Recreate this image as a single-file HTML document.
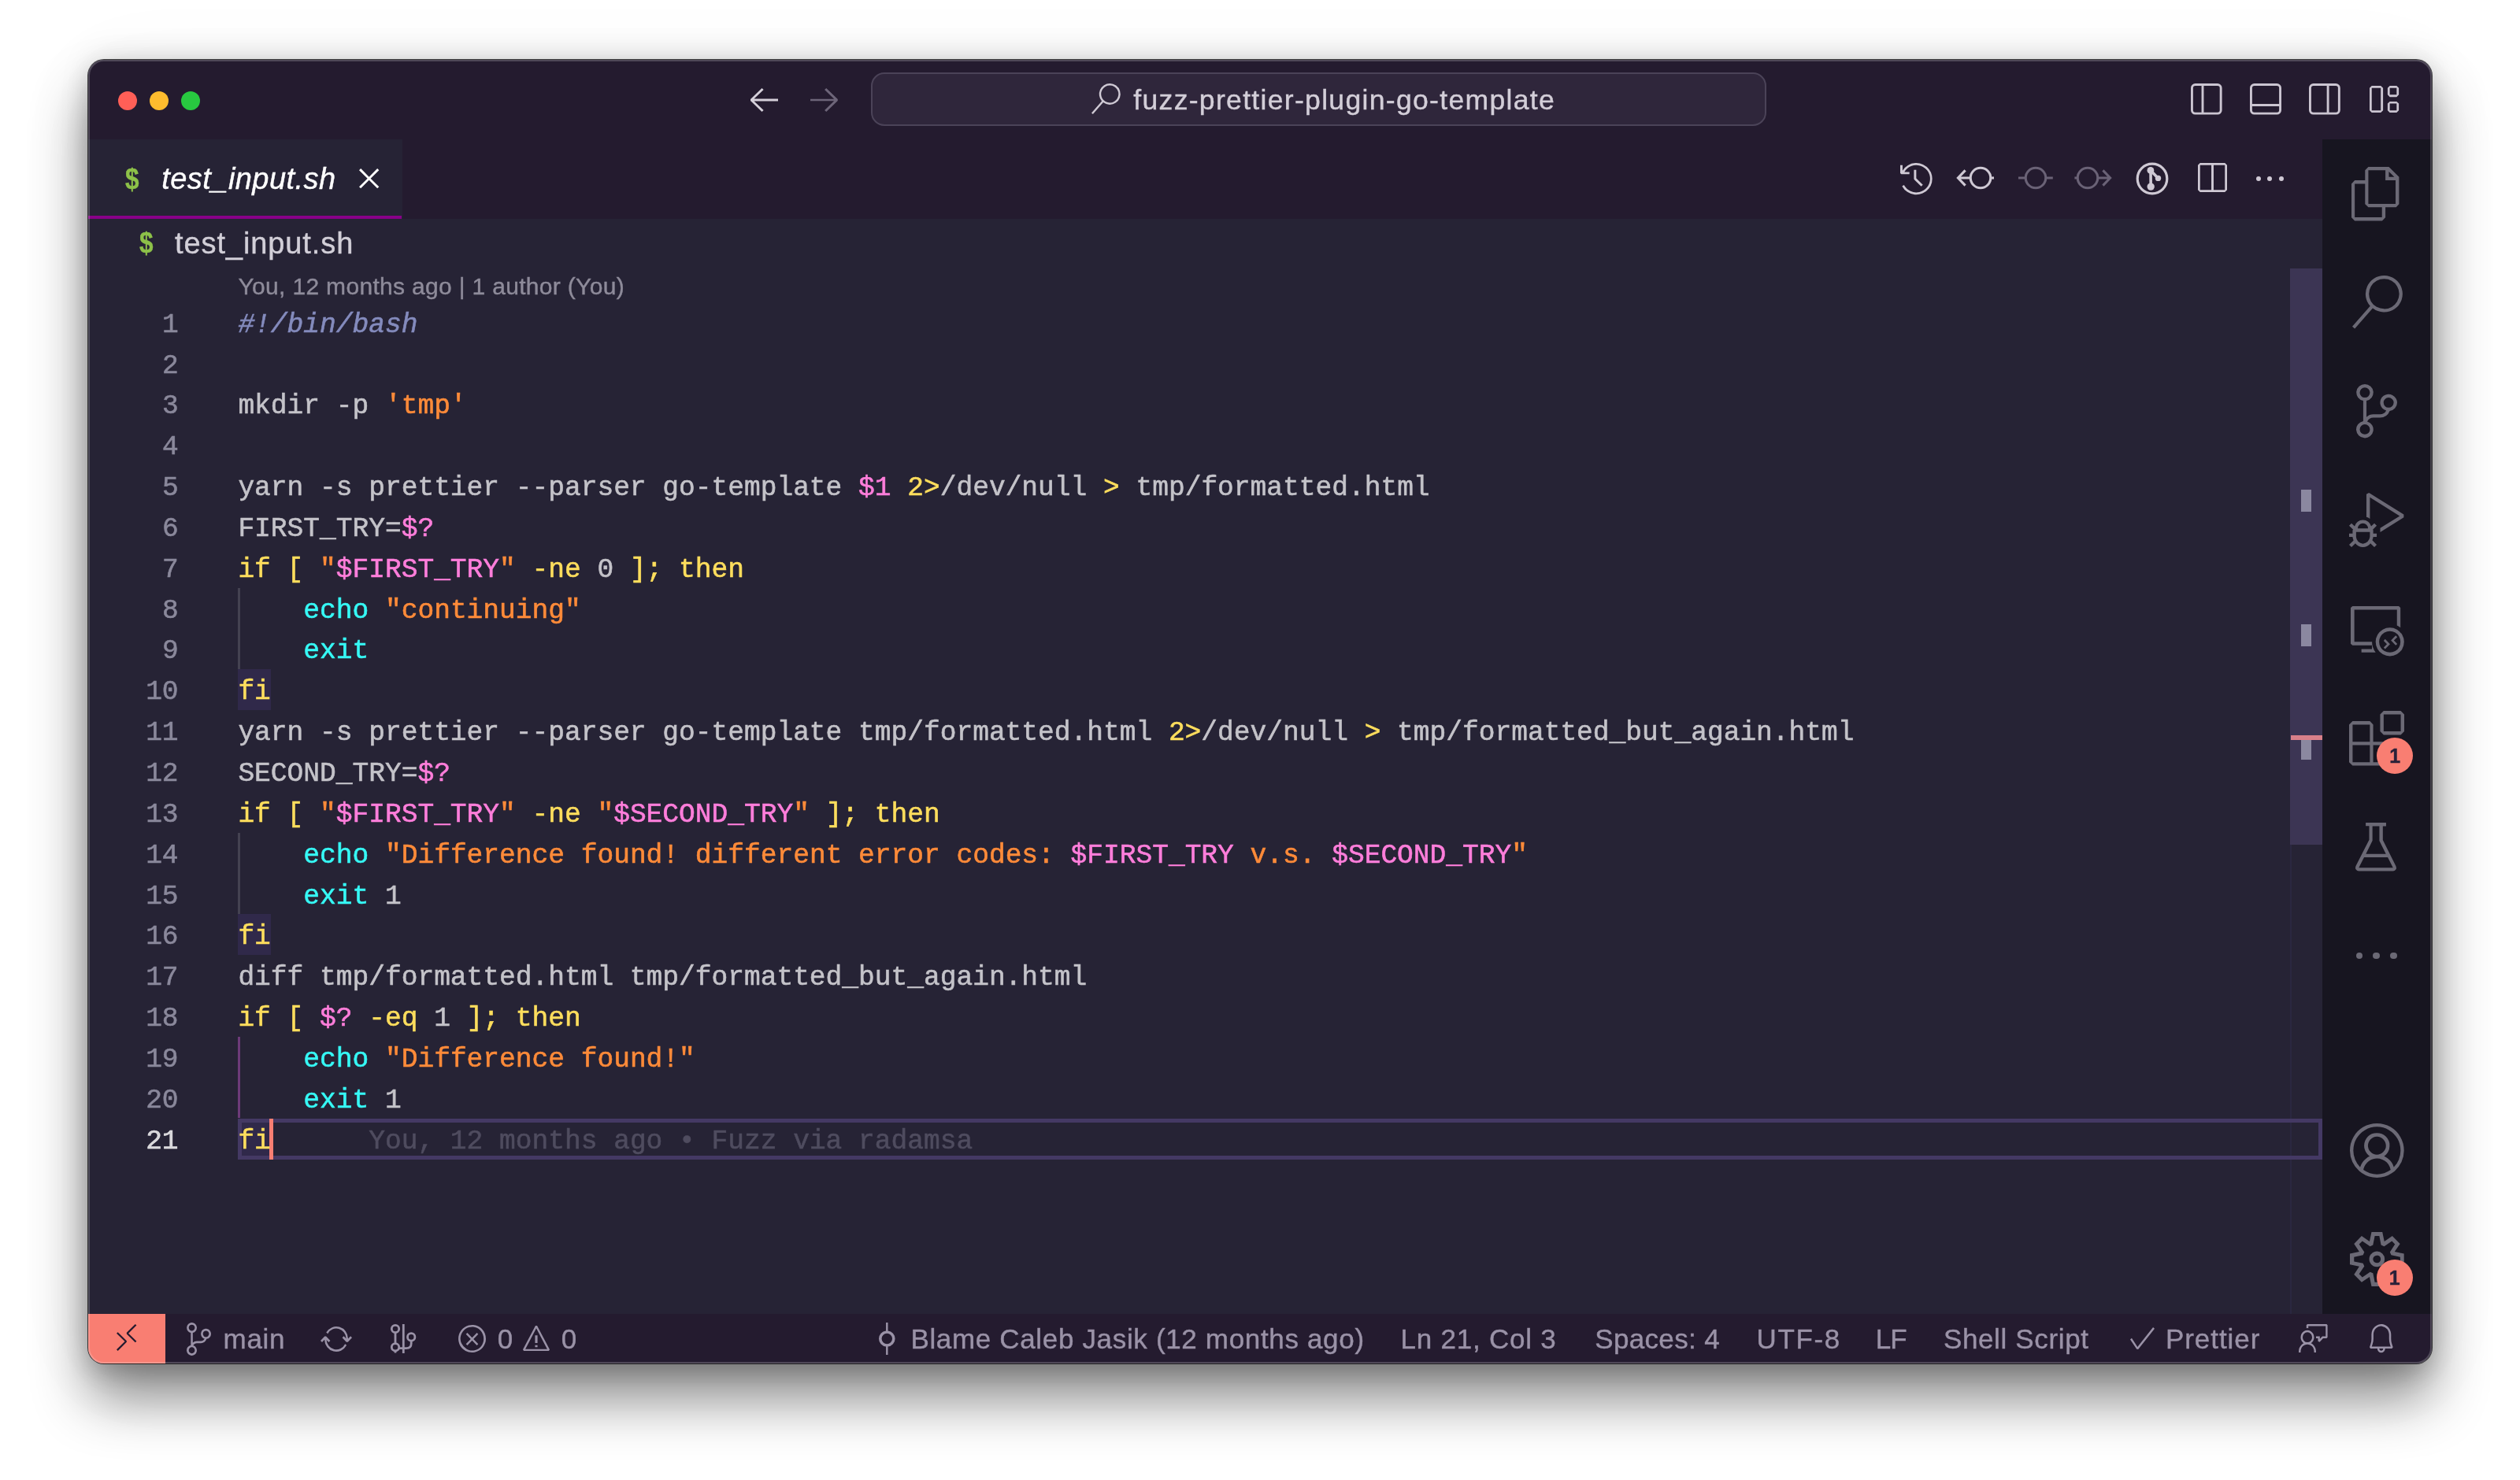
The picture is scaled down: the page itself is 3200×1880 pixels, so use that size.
<!DOCTYPE html>
<html lang="en"><head><meta charset="utf-8"><title>test_input.sh — fuzz-prettier-plugin-go-template</title>
<style>
html,body{margin:0;padding:0;background:#fff;}
body{width:3200px;height:1880px;position:relative;overflow:hidden;font-family:"Liberation Sans",sans-serif;}
#shadow{position:absolute;left:112px;top:76px;width:2976px;height:1656px;border-radius:20px;
 box-shadow:0 0 0 1px rgba(0,0,0,.72), 0 45px 70px 0px rgba(0,0,0,.45), 0 12px 30px rgba(0,0,0,.14), 0 -8px 40px rgba(0,0,0,.08), 0 10px 120px rgba(0,0,0,.04);}
#win{position:absolute;left:112px;top:76px;width:2976px;height:1656px;border-radius:20px;overflow:hidden;background:#262335;}
#pg{position:absolute;left:-112px;top:-76px;width:3200px;height:1880px;will-change:transform;}
#pg div{-webkit-text-stroke-width:0.4px}
#pg div.code{-webkit-text-stroke-width:0.55px}
#rim{position:absolute;left:112px;top:76px;width:2976px;height:1656px;border-radius:20px;box-sizing:border-box;border:2px solid rgba(255,255,255,.2);pointer-events:none;}
.k{color:#fede5d}.s{color:#ff8b39}.v{color:#ff7edb}.f{color:#36f9f6}.c{color:#848bbd;font-style:italic}
</style></head><body>
<div id="shadow"></div>
<div id="win"><div id="pg">

<div style="position:absolute;left:112.00px;top:75.00px;width:2976.00px;height:102.00px;background:#241b2f;"></div>
<div style="position:absolute;left:112.00px;top:177.00px;width:2837.30px;height:101.00px;background:#241b2f;"></div>
<div style="position:absolute;left:2949.30px;top:176.60px;width:138.70px;height:1492.00px;background:#171520;"></div>
<div style="position:absolute;left:112.00px;top:1668.60px;width:2976.00px;height:63.40px;background:#241b2f;"></div>
<div style="position:absolute;left:112.00px;top:177.00px;width:399.00px;height:101.00px;background:#262335;"></div>
<div style="position:absolute;left:112.00px;top:274.20px;width:397.50px;height:4.00px;background:#880088;"></div>
<div style="position:absolute;left:149.80px;top:115.60px;width:24.40px;height:24.40px;background:#ff5f57;border-radius:50%;"></div>
<div style="position:absolute;left:189.80px;top:115.60px;width:24.40px;height:24.40px;background:#febc2e;border-radius:50%;"></div>
<div style="position:absolute;left:229.80px;top:115.60px;width:24.40px;height:24.40px;background:#28c840;border-radius:50%;"></div>
<svg style="position:absolute;left:953.00px;top:112.40px;overflow:visible;" width="35.00" height="30.00" viewBox="38.00 58.00 225.00 201.00" preserveAspectRatio="none"><path fill="#d5d0da" d="M131 58 38 152V165L131 259L145 245L67 168H263V149H67L145 71Z"/></svg>
<svg style="position:absolute;left:1028.60px;top:112.40px;overflow:visible;" width="34.80" height="30.00" viewBox="38.00 60.00 225.00 200.00" preserveAspectRatio="none"><path fill="#6d6579" d="M169 260 263 167V153L169 60L155 73L233 151H38V169H233L155 247Z"/></svg>
<div style="position:absolute;left:1106px;top:92px;width:1136.5px;height:68.2px;box-sizing:border-box;border:2px solid #4b4358;border-radius:17px;background:#2f263b;"></div>
<svg style="position:absolute;left:1385.50px;top:106.00px;overflow:visible;" width="36.80" height="39.00" viewBox="13.00 0.00 280.76 298.00" preserveAspectRatio="none"><path fill="#cfc9d4" d="M191 0Q160 0 134.5 16.5Q109 33 96.5 61Q84 89 88.5 119Q93 149 113 171L13 286L27 298L127 184Q154 205 187.5 206Q221 207 249 188Q277 169 288 137Q299 105 289 72.5Q279 40 251.5 20Q224 0 191 0ZM191 187Q168 187 148.5 176Q129 165 117.5 145.5Q106 126 106 103Q106 80 117.5 60.5Q129 41 148.5 30Q168 19 191 19Q214 19 233 30Q252 41 263.5 60.5Q275 80 275 103Q275 126 263.5 145.5Q252 165 233 176.5Q214 188 191 188Z"/></svg>
<div style="position:absolute;left:1439.30px;top:105.50px;height:42.72px;line-height:42.72px;font-family:'Liberation Sans',sans-serif;font-size:35.6px;color:#d3ced8;white-space:pre;letter-spacing:1.292px;">fuzz-prettier-plugin-go-template</div>
<svg style="position:absolute;left:2782.10px;top:106.10px" width="39.60" height="39.60" viewBox="2782.10 106.10 39.60 39.60"><g fill="none" stroke="#cbc5d1" stroke-width="2.9"><rect x="2783.55" y="107.55" width="36.70" height="36.70" rx="4.2"/><path d="M2797.1 107.55V144.25"/></g></svg>
<svg style="position:absolute;left:2856.90px;top:106.10px" width="40.00" height="39.60" viewBox="2856.90 106.10 40.00 39.60"><g fill="none" stroke="#cbc5d1" stroke-width="2.9"><rect x="2858.35" y="107.55" width="37.10" height="36.70" rx="4.2"/><path d="M2858.35 133.6H2895.4500000000003"/></g></svg>
<svg style="position:absolute;left:2931.90px;top:106.10px" width="39.80" height="39.60" viewBox="2931.90 106.10 39.80 39.60"><g fill="none" stroke="#cbc5d1" stroke-width="2.9"><rect x="2933.35" y="107.55" width="36.90" height="36.70" rx="4.2"/><path d="M2956 107.55V144.25"/></g></svg>
<svg style="position:absolute;left:3009.30px;top:109.00px;overflow:visible;" width="37.10" height="33.90" viewBox="38.00 37.00 243.00 225.00" preserveAspectRatio="none"><path fill="#cbc5d1" d="M56 37 38 56V244L56 262H131L150 244V56L131 37ZM56 244V56H131V244ZM188 56 206 37H263L281 56V112L263 131H206L188 112ZM206 56V112H263V56ZM188 187 206 169H263L281 187V244L263 262H206L188 244ZM206 187V244H263V187Z"/></svg>
<div style="position:absolute;left:158.80px;top:204.81px;height:45.00px;line-height:45.00px;font-family:'Liberation Sans',sans-serif;font-size:37.5px;color:#8dc149;white-space:pre;font-weight:bold;transform:scaleX(0.84);transform-origin:0 50%;">$</div>
<div style="position:absolute;left:205.30px;top:204.53px;height:45.60px;line-height:45.60px;font-family:'Liberation Sans',sans-serif;font-size:38px;color:#ffffff;white-space:pre;font-style:italic;letter-spacing:0.440px;">test_input.sh</div>
<svg style="position:absolute;left:455.70px;top:214.40px;overflow:visible;" width="25.30" height="25.30" viewBox="68.00 68.00 164.00 164.00" preserveAspectRatio="none"><path fill="#ffffff" d="M150 163 218 232 232 218 163 150 232 82 218 68 150 137 82 68 68 82 137 150 68 218 82 232Z"/></svg>
<svg style="position:absolute;left:2412.90px;top:206.60px;overflow:visible;" width="40.70" height="40.30" viewBox="19.00 18.75 261.88 262.80" preserveAspectRatio="none"><path fill="#cfc9d4" d="M253 231Q271 208 277.5 179.5Q284 151 278 122.5Q272 94 254 71Q235 45 205 31Q175 17 142.5 19Q110 21 82 37.5Q54 54 38 82V37H19V103L28 112H94V94H53Q72 60 108 45.5Q144 31 181 41.5Q218 52 241 83Q264 114 263 152.5Q262 191 237.5 221Q213 251 175.5 260Q138 269 103 252.5Q68 236 50 202L34 211Q49 240 77 259Q105 278 138 281Q171 284 202 270.5Q233 257 253 231ZM190 213 204 200 150 146V75H131V150L134 157Z"/></svg>
<svg style="position:absolute;left:2475.10px;top:201.60px;overflow:visible" width="80" height="48" viewBox="-40 -24 80 48"><g fill="none" stroke="#cfc9d4" stroke-width="3.1" stroke-linecap="butt" stroke-linejoin="miter"><circle cx="0" cy="0" r="12.75"/><path d="M-13.95 0H-28.3 M-19.4 -9.6L-28.6 0L-19.4 9.6"/><path d="M13.95 0H17"/></g></svg>
<svg style="position:absolute;left:2545.00px;top:201.60px;overflow:visible" width="80" height="48" viewBox="-40 -24 80 48"><g fill="none" stroke="#6a6276" stroke-width="3.1" stroke-linecap="butt" stroke-linejoin="miter"><circle cx="0" cy="0" r="12.75"/><path d="M-13.95 0H-22 M13.95 0H21.8"/></g></svg>
<svg style="position:absolute;left:2611.40px;top:201.60px;overflow:visible" width="80" height="48" viewBox="-40 -24 80 48"><g fill="none" stroke="#6a6276" stroke-width="3.1" stroke-linecap="butt" stroke-linejoin="miter"><circle cx="0" cy="0" r="12.75"/><path d="M13.95 0H28.3 M19.4 -9.6L28.6 0L19.4 9.6"/><path d="M-13.95 0H-16.6"/></g></svg>
<svg style="position:absolute;left:2709.20px;top:203.00px" width="48" height="48" viewBox="-24 -24 48 48"><g stroke="#cfc9d4" fill="none" stroke-width="3.2"><circle r="18.8"/><path d="M-2 -10.6L-1.8 10.1 M-2 -10.6L7.5 -0.6" stroke-width="3.6"/></g><g fill="#cfc9d4"><circle cx="-2.1" cy="-10.6" r="4.4"/><circle cx="-1.8" cy="10.1" r="4.7"/><circle cx="7.5" cy="-0.6" r="3.7"/></g></svg>
<svg style="position:absolute;left:2790.80px;top:207.00px;overflow:visible;" width="37.00" height="36.90" viewBox="38.00 19.00 243.00 243.00" preserveAspectRatio="none"><path fill="#cfc9d4" d="M263 19H56L38 37V244L56 262H263L281 244V37ZM150 244H56V37H150ZM263 244H169V37H263Z"/></svg>
<div style="position:absolute;left:2864.80px;top:223.70px;width:6.20px;height:6.20px;background:#cfc9d4;border-radius:50%;"></div>
<div style="position:absolute;left:2879.30px;top:223.70px;width:6.20px;height:6.20px;background:#cfc9d4;border-radius:50%;"></div>
<div style="position:absolute;left:2893.80px;top:223.70px;width:6.20px;height:6.20px;background:#cfc9d4;border-radius:50%;"></div>
<div style="position:absolute;left:176.90px;top:285.81px;height:45.00px;line-height:45.00px;font-family:'Liberation Sans',sans-serif;font-size:37.5px;color:#8dc149;white-space:pre;font-weight:bold;transform:scaleX(0.84);transform-origin:0 50%;">$</div>
<div style="position:absolute;left:222.00px;top:286.83px;height:45.60px;line-height:45.60px;font-family:'Liberation Sans',sans-serif;font-size:38px;color:#d2cfd8;white-space:pre;letter-spacing:0.902px;">test_input.sh</div>
<div style="position:absolute;left:2908.00px;top:341.00px;width:40.60px;height:732.00px;background:#3c3554;"></div>
<div style="position:absolute;left:2908.30px;top:1073.00px;width:1.50px;height:595.60px;background:#2a2740;"></div>
<div style="position:absolute;left:2922.00px;top:621.50px;width:13.00px;height:28.00px;background:#8b88a0;"></div>
<div style="position:absolute;left:2922.00px;top:793.00px;width:13.00px;height:28.00px;background:#8b88a0;"></div>
<div style="position:absolute;left:2922.00px;top:939.70px;width:13.00px;height:25.00px;background:#8b88a0;"></div>
<div style="position:absolute;left:2908.60px;top:934.00px;width:40.00px;height:5.70px;background:#d9808a;"></div>
<div style="position:absolute;left:302.40px;top:746.58px;width:2.90px;height:103.68px;background:#444251;"></div>
<div style="position:absolute;left:302.40px;top:1057.62px;width:2.90px;height:103.68px;background:#444251;"></div>
<div style="position:absolute;left:302.40px;top:1316.82px;width:2.90px;height:103.68px;background:#6d3a79;"></div>
<div style="position:absolute;left:302.40px;top:850.26px;width:41.47px;height:51.84px;background:#30294a;"></div>
<div style="position:absolute;left:302.40px;top:1161.30px;width:41.47px;height:51.84px;background:#30294a;"></div>
<div style="position:absolute;left:302.40px;top:1420.50px;width:41.47px;height:51.84px;background:#30294a;"></div>
<div style="position:absolute;left:302.20px;top:1421.00px;width:2647.10px;height:52.44px;box-sizing:border-box;border:5.3px solid #443964;"></div>
<div style="position:absolute;left:341.80px;top:1421.00px;width:5.20px;height:52.34px;background:#f97e72;"></div>
<div style="position:absolute;left:302.50px;top:345.81px;height:36.00px;line-height:36.00px;font-family:'Liberation Sans',sans-serif;font-size:30px;color:#8e8b9a;white-space:pre;letter-spacing:0.321px;">You, 12 months ago | 1 author (You)</div>
<div class="code" style="position:absolute;right:2973.40px;top:391.75px;height:41.47px;line-height:41.47px;font-family:'Liberation Mono',monospace;font-size:34.56px;color:#8a889b;white-space:pre;letter-spacing:-0.0035px;">1</div>
<div class="code" style="position:absolute;left:302.40px;top:391.75px;height:41.47px;line-height:41.47px;font-family:'Liberation Mono',monospace;font-size:34.56px;color:#c4c3c9;white-space:pre;letter-spacing:-0.0035px;"><span class="c">#!/bin/bash</span></div>
<div class="code" style="position:absolute;right:2973.40px;top:443.59px;height:41.47px;line-height:41.47px;font-family:'Liberation Mono',monospace;font-size:34.56px;color:#8a889b;white-space:pre;letter-spacing:-0.0035px;">2</div>
<div class="code" style="position:absolute;right:2973.40px;top:495.43px;height:41.47px;line-height:41.47px;font-family:'Liberation Mono',monospace;font-size:34.56px;color:#8a889b;white-space:pre;letter-spacing:-0.0035px;">3</div>
<div class="code" style="position:absolute;left:302.40px;top:495.43px;height:41.47px;line-height:41.47px;font-family:'Liberation Mono',monospace;font-size:34.56px;color:#c4c3c9;white-space:pre;letter-spacing:-0.0035px;">mkdir -p <span class="s">'tmp'</span></div>
<div class="code" style="position:absolute;right:2973.40px;top:547.27px;height:41.47px;line-height:41.47px;font-family:'Liberation Mono',monospace;font-size:34.56px;color:#8a889b;white-space:pre;letter-spacing:-0.0035px;">4</div>
<div class="code" style="position:absolute;right:2973.40px;top:599.11px;height:41.47px;line-height:41.47px;font-family:'Liberation Mono',monospace;font-size:34.56px;color:#8a889b;white-space:pre;letter-spacing:-0.0035px;">5</div>
<div class="code" style="position:absolute;left:302.40px;top:599.11px;height:41.47px;line-height:41.47px;font-family:'Liberation Mono',monospace;font-size:34.56px;color:#c4c3c9;white-space:pre;letter-spacing:-0.0035px;">yarn -s prettier --parser go-template <span class="v">$1</span> <span class="k">2&gt;</span>/dev/null <span class="k">&gt;</span> tmp/formatted.html</div>
<div class="code" style="position:absolute;right:2973.40px;top:650.95px;height:41.47px;line-height:41.47px;font-family:'Liberation Mono',monospace;font-size:34.56px;color:#8a889b;white-space:pre;letter-spacing:-0.0035px;">6</div>
<div class="code" style="position:absolute;left:302.40px;top:650.95px;height:41.47px;line-height:41.47px;font-family:'Liberation Mono',monospace;font-size:34.56px;color:#c4c3c9;white-space:pre;letter-spacing:-0.0035px;">FIRST_TRY=<span class="v">$?</span></div>
<div class="code" style="position:absolute;right:2973.40px;top:702.79px;height:41.47px;line-height:41.47px;font-family:'Liberation Mono',monospace;font-size:34.56px;color:#8a889b;white-space:pre;letter-spacing:-0.0035px;">7</div>
<div class="code" style="position:absolute;left:302.40px;top:702.79px;height:41.47px;line-height:41.47px;font-family:'Liberation Mono',monospace;font-size:34.56px;color:#c4c3c9;white-space:pre;letter-spacing:-0.0035px;"><span class="k">if [ </span><span class="s">"</span><span class="v">$FIRST_TRY</span><span class="s">"</span><span class="k"> -ne </span>0<span class="k"> ]; then</span></div>
<div class="code" style="position:absolute;right:2973.40px;top:754.63px;height:41.47px;line-height:41.47px;font-family:'Liberation Mono',monospace;font-size:34.56px;color:#8a889b;white-space:pre;letter-spacing:-0.0035px;">8</div>
<div class="code" style="position:absolute;left:302.40px;top:754.63px;height:41.47px;line-height:41.47px;font-family:'Liberation Mono',monospace;font-size:34.56px;color:#c4c3c9;white-space:pre;letter-spacing:-0.0035px;">    <span class="f">echo</span> <span class="s">"continuing"</span></div>
<div class="code" style="position:absolute;right:2973.40px;top:806.47px;height:41.47px;line-height:41.47px;font-family:'Liberation Mono',monospace;font-size:34.56px;color:#8a889b;white-space:pre;letter-spacing:-0.0035px;">9</div>
<div class="code" style="position:absolute;left:302.40px;top:806.47px;height:41.47px;line-height:41.47px;font-family:'Liberation Mono',monospace;font-size:34.56px;color:#c4c3c9;white-space:pre;letter-spacing:-0.0035px;">    <span class="f">exit</span></div>
<div class="code" style="position:absolute;right:2973.40px;top:858.31px;height:41.47px;line-height:41.47px;font-family:'Liberation Mono',monospace;font-size:34.56px;color:#8a889b;white-space:pre;letter-spacing:-0.0035px;">10</div>
<div class="code" style="position:absolute;left:302.40px;top:858.31px;height:41.47px;line-height:41.47px;font-family:'Liberation Mono',monospace;font-size:34.56px;color:#c4c3c9;white-space:pre;letter-spacing:-0.0035px;"><span class="k">fi</span></div>
<div class="code" style="position:absolute;right:2973.40px;top:910.15px;height:41.47px;line-height:41.47px;font-family:'Liberation Mono',monospace;font-size:34.56px;color:#8a889b;white-space:pre;letter-spacing:-0.0035px;">11</div>
<div class="code" style="position:absolute;left:302.40px;top:910.15px;height:41.47px;line-height:41.47px;font-family:'Liberation Mono',monospace;font-size:34.56px;color:#c4c3c9;white-space:pre;letter-spacing:-0.0035px;">yarn -s prettier --parser go-template tmp/formatted.html <span class="k">2&gt;</span>/dev/null <span class="k">&gt;</span> tmp/formatted_but_again.html</div>
<div class="code" style="position:absolute;right:2973.40px;top:961.99px;height:41.47px;line-height:41.47px;font-family:'Liberation Mono',monospace;font-size:34.56px;color:#8a889b;white-space:pre;letter-spacing:-0.0035px;">12</div>
<div class="code" style="position:absolute;left:302.40px;top:961.99px;height:41.47px;line-height:41.47px;font-family:'Liberation Mono',monospace;font-size:34.56px;color:#c4c3c9;white-space:pre;letter-spacing:-0.0035px;">SECOND_TRY=<span class="v">$?</span></div>
<div class="code" style="position:absolute;right:2973.40px;top:1013.83px;height:41.47px;line-height:41.47px;font-family:'Liberation Mono',monospace;font-size:34.56px;color:#8a889b;white-space:pre;letter-spacing:-0.0035px;">13</div>
<div class="code" style="position:absolute;left:302.40px;top:1013.83px;height:41.47px;line-height:41.47px;font-family:'Liberation Mono',monospace;font-size:34.56px;color:#c4c3c9;white-space:pre;letter-spacing:-0.0035px;"><span class="k">if [ </span><span class="s">"</span><span class="v">$FIRST_TRY</span><span class="s">"</span><span class="k"> -ne </span><span class="s">"</span><span class="v">$SECOND_TRY</span><span class="s">"</span><span class="k"> ]; then</span></div>
<div class="code" style="position:absolute;right:2973.40px;top:1065.67px;height:41.47px;line-height:41.47px;font-family:'Liberation Mono',monospace;font-size:34.56px;color:#8a889b;white-space:pre;letter-spacing:-0.0035px;">14</div>
<div class="code" style="position:absolute;left:302.40px;top:1065.67px;height:41.47px;line-height:41.47px;font-family:'Liberation Mono',monospace;font-size:34.56px;color:#c4c3c9;white-space:pre;letter-spacing:-0.0035px;">    <span class="f">echo</span> <span class="s">"Difference found! different error codes: </span><span class="v">$FIRST_TRY</span><span class="s"> v.s. </span><span class="v">$SECOND_TRY</span><span class="s">"</span></div>
<div class="code" style="position:absolute;right:2973.40px;top:1117.51px;height:41.47px;line-height:41.47px;font-family:'Liberation Mono',monospace;font-size:34.56px;color:#8a889b;white-space:pre;letter-spacing:-0.0035px;">15</div>
<div class="code" style="position:absolute;left:302.40px;top:1117.51px;height:41.47px;line-height:41.47px;font-family:'Liberation Mono',monospace;font-size:34.56px;color:#c4c3c9;white-space:pre;letter-spacing:-0.0035px;">    <span class="f">exit</span> 1</div>
<div class="code" style="position:absolute;right:2973.40px;top:1169.35px;height:41.47px;line-height:41.47px;font-family:'Liberation Mono',monospace;font-size:34.56px;color:#8a889b;white-space:pre;letter-spacing:-0.0035px;">16</div>
<div class="code" style="position:absolute;left:302.40px;top:1169.35px;height:41.47px;line-height:41.47px;font-family:'Liberation Mono',monospace;font-size:34.56px;color:#c4c3c9;white-space:pre;letter-spacing:-0.0035px;"><span class="k">fi</span></div>
<div class="code" style="position:absolute;right:2973.40px;top:1221.19px;height:41.47px;line-height:41.47px;font-family:'Liberation Mono',monospace;font-size:34.56px;color:#8a889b;white-space:pre;letter-spacing:-0.0035px;">17</div>
<div class="code" style="position:absolute;left:302.40px;top:1221.19px;height:41.47px;line-height:41.47px;font-family:'Liberation Mono',monospace;font-size:34.56px;color:#c4c3c9;white-space:pre;letter-spacing:-0.0035px;">diff tmp/formatted.html tmp/formatted_but_again.html</div>
<div class="code" style="position:absolute;right:2973.40px;top:1273.03px;height:41.47px;line-height:41.47px;font-family:'Liberation Mono',monospace;font-size:34.56px;color:#8a889b;white-space:pre;letter-spacing:-0.0035px;">18</div>
<div class="code" style="position:absolute;left:302.40px;top:1273.03px;height:41.47px;line-height:41.47px;font-family:'Liberation Mono',monospace;font-size:34.56px;color:#c4c3c9;white-space:pre;letter-spacing:-0.0035px;"><span class="k">if [ </span><span class="v">$?</span><span class="k"> -eq </span>1<span class="k"> ]; then</span></div>
<div class="code" style="position:absolute;right:2973.40px;top:1324.87px;height:41.47px;line-height:41.47px;font-family:'Liberation Mono',monospace;font-size:34.56px;color:#8a889b;white-space:pre;letter-spacing:-0.0035px;">19</div>
<div class="code" style="position:absolute;left:302.40px;top:1324.87px;height:41.47px;line-height:41.47px;font-family:'Liberation Mono',monospace;font-size:34.56px;color:#c4c3c9;white-space:pre;letter-spacing:-0.0035px;">    <span class="f">echo</span> <span class="s">"Difference found!"</span></div>
<div class="code" style="position:absolute;right:2973.40px;top:1376.71px;height:41.47px;line-height:41.47px;font-family:'Liberation Mono',monospace;font-size:34.56px;color:#8a889b;white-space:pre;letter-spacing:-0.0035px;">20</div>
<div class="code" style="position:absolute;left:302.40px;top:1376.71px;height:41.47px;line-height:41.47px;font-family:'Liberation Mono',monospace;font-size:34.56px;color:#c4c3c9;white-space:pre;letter-spacing:-0.0035px;">    <span class="f">exit</span> 1</div>
<div class="code" style="position:absolute;right:2973.40px;top:1428.55px;height:41.47px;line-height:41.47px;font-family:'Liberation Mono',monospace;font-size:34.56px;color:#ffffffd0;white-space:pre;letter-spacing:-0.0035px;">21</div>
<div class="code" style="position:absolute;left:302.40px;top:1428.55px;height:41.47px;line-height:41.47px;font-family:'Liberation Mono',monospace;font-size:34.56px;color:#c4c3c9;white-space:pre;letter-spacing:-0.0035px;"><span class="k">fi</span><span style="color:#4f4c5f">      You, 12 months ago • Fuzz via radamsa</span></div>
<svg style="position:absolute;left:2986.10px;top:211.60px;overflow:visible;" width="60.40" height="68.40" viewBox="13.00 0.00 262.00 300.00" preserveAspectRatio="none"><path fill="#6b6975" d="M219 0H106L88 19V75H31L13 94V282L31 300H182L200 282V225H259L275 207V56ZM219 26 249 56H219ZM181 281H31V94H88V207L106 225H181ZM256 206H106V19H200V75H256Z"/></svg>
<svg style="position:absolute;left:2986.70px;top:350.00px;overflow:visible;" width="63.90" height="67.40" viewBox="13.00 0.00 280.76 298.00" preserveAspectRatio="none"><path fill="#6b6975" d="M191 0Q160 0 134.5 16.5Q109 33 96.5 61Q84 89 88.5 119Q93 149 113 171L13 286L27 298L127 184Q154 205 187.5 206Q221 207 249 188Q277 169 288 137Q299 105 289 72.5Q279 40 251.5 20Q224 0 191 0ZM191 187Q168 187 148.5 176Q129 165 117.5 145.5Q106 126 106 103Q106 80 117.5 60.5Q129 41 148.5 30Q168 19 191 19Q214 19 233 30Q252 41 263.5 60.5Q275 80 275 103Q275 126 263.5 145.5Q252 165 233 176.5Q214 188 191 188Z"/></svg>
<svg style="position:absolute;left:2992.00px;top:488.20px;overflow:visible;" width="52.00" height="68.40" viewBox="37.32 0.00 225.68 300.08" preserveAspectRatio="none"><path fill="#6b6975" d="M263 103Q263 90 256 78.5Q249 67 237 61Q225 55 212 56Q199 57 188 65Q177 73 172.5 85.5Q168 98 170 111Q172 124 181 133.5Q190 143 203 147Q198 157 189 162.5Q180 168 169 168H132Q110 168 94 183V92Q112 89 122.5 74.5Q133 60 131.5 42Q130 24 116.5 12Q103 0 85 0Q67 0 53.5 12Q40 24 38.5 42Q37 60 47.5 74.5Q58 89 76 92V206Q58 210 47 224Q36 238 37.5 256Q39 274 51.5 286.5Q64 299 82 300Q100 301 114 290Q128 279 131 261Q134 243 125 228Q116 213 98 208Q103 198 112 192.5Q121 187 132 187H169Q187 187 201.5 176.5Q216 166 222 149Q239 147 251 133.5Q263 120 263 103ZM57 47Q57 35 65 27Q73 19 85 19Q97 19 105 27Q113 35 113 46.5Q113 58 105 66.5Q97 75 85 75Q73 75 65 66.5Q57 58 57 47ZM113 252Q113 264 105 272Q97 280 85 280Q73 280 65 272Q57 264 57 252.5Q57 241 65 232.5Q73 224 85 224Q97 224 105 232.5Q113 241 113 252ZM216 131Q204 131 196 122.5Q188 114 188 102.5Q188 91 196 83Q204 75 215.5 75Q227 75 235.5 83Q244 91 244 102.5Q244 114 235.5 122.5Q227 131 216 131Z"/></svg>
<svg style="position:absolute;left:2983.00px;top:626.20px;overflow:visible;" width="69.40" height="69.00" viewBox="0.00 0.00 297.00 300.00" preserveAspectRatio="none"><path fill="#6b6975" d="M137 169 120 185Q116 170 103.5 160Q91 150 75 150Q59 150 46.5 160Q34 170 30 185L13 169L0 182L22 203L19 206V225H0V244H19V245Q20 254 24 263L0 287L13 300L34 279Q41 289 52 294.5Q63 300 75 300Q87 300 98 294.5Q109 289 116 279L137 300L150 287L126 262Q130 254 131 244V243H150V225H131V206L129 203L150 182ZM75 169Q87 169 95 177Q103 185 103 197H47Q47 185 55 177Q63 169 75 169ZM113 244Q111 259 100.5 269.5Q90 280 75 281Q60 280 49.5 269.5Q39 259 38 244V216H113ZM297 120V136L169 217V195L275 128L113 25V143Q104 137 94 134V8L108 0Z"/></svg>
<svg style="position:absolute;left:2984.60px;top:770.00px;overflow:visible;" width="67.80" height="63.50" viewBox="7.00 27.00 293.00 273.00" preserveAspectRatio="none"><path fill="#6b6975" d="M17 27H271L280 36V144Q271 137 261 132V46H27V222H124Q124 254 144 280H66V261H124V241H17L7 232V36ZM222 144Q201 144 183 154.5Q165 165 154.5 183Q144 201 144 222Q144 243 154.5 261Q165 279 183 289.5Q201 300 222 300Q243 300 261 289.5Q279 279 289.5 261Q300 243 300 222Q300 201 289.5 183Q279 165 261 154.5Q243 144 222 144ZM222 280Q206 280 192.5 272.5Q179 265 171 251.5Q163 238 163 222Q163 206 171 192.5Q179 179 192.5 171Q206 163 222 163Q238 163 251.5 171Q265 179 272.5 192.5Q280 206 280 222Q280 238 272.5 251.5Q265 265 251.5 272.5Q238 280 222 280ZM254 241 228 214 254 187 263 196 244 214 263 233ZM188 216 206 234 188 253 196 261 223 234 196 207Z"/></svg>
<svg style="position:absolute;left:2983.00px;top:902.70px;overflow:visible;" width="70.00" height="69.60" viewBox="0.00 0.00 300.00 300.00" preserveAspectRatio="none"><path fill="#6b6975" d="M169 19 188 0H281L300 19V112L281 131H188L169 112ZM188 19V112H281V19ZM0 187V75L19 56H113L131 75V169H225L244 187V281L225 300H19L0 281ZM113 169V75H19V169ZM113 187H19V281H113ZM131 281H225V187H131Z"/></svg>
<svg style="position:absolute;left:2991.00px;top:1045.00px;overflow:visible;" width="52.00" height="61.50" viewBox="37.32 19.00 225.07 262.00" preserveAspectRatio="none"><path fill="#6b6975" d="M260 254 188 113V38H206V19H94V37H113V112L39 254Q35 264 40.5 272.5Q46 281 56 281H244Q254 281 259.5 272.5Q265 264 260 254ZM129 120 131 116V38H169V117L205 188H95ZM56 263 85 206H215L244 263Z"/></svg>
<div style="position:absolute;left:2991.60px;top:1209.70px;width:8.60px;height:8.60px;background:#6b6975;border-radius:50%;"></div>
<div style="position:absolute;left:3013.30px;top:1209.70px;width:8.60px;height:8.60px;background:#6b6975;border-radius:50%;"></div>
<div style="position:absolute;left:3035.10px;top:1209.70px;width:8.60px;height:8.60px;background:#6b6975;border-radius:50%;"></div>
<svg style="position:absolute;left:2983.50px;top:1427.00px;overflow:visible;" width="68.70" height="69.00" viewBox="0.00 0.00 300.00 300.00" preserveAspectRatio="none"><path fill="#6b6975" d="M300 150Q300 109 280 74.5Q260 40 225.5 20Q191 0 150 0Q109 0 74.5 20Q40 40 20 74.5Q0 109 0 150Q0 183 14 213Q28 243 53 264L66 274Q104 300 150 300Q196 300 234 274L248 264Q272 243 286 213Q300 183 300 150ZM150 281Q109 281 75 257L76 250Q79 240 84 231.5Q89 223 96 216Q103 209 111 204Q119 199 129.5 196.5Q140 194 150 194Q165 194 179.5 199.5Q194 205 204.5 215.5Q215 226 221 240Q224 248 226 257Q192 281 150 281ZM104 142Q100 133 100 123Q100 113 104 104Q108 95 114.5 88.5Q121 82 130 77.5Q139 73 150 73Q161 73 169.5 77Q178 81 185 88Q192 95 196 104Q200 113 200 123.5Q200 134 196 142.5Q192 151 185 158Q178 165 169 169Q150 177 130 169Q122 165 115 158Q108 151 104 142ZM243 242Q243 242 243 241V240Q239 226 230.5 214Q222 202 210 193Q201 186 190 181Q195 178 199 174Q206 167 211 159Q221 143 220 123Q221 109 215.5 96Q210 83 200 73Q190 63 177 58Q164 53 149.5 53Q135 53 122 58Q109 63 99.5 73Q90 83 84.5 96Q79 109 79 123Q79 133 82 142.5Q85 152 89 159Q93 166 101 174Q105 178 110 182Q100 186 91 193Q79 202 70.5 214Q62 226 57 241V242Q39 224 29 200Q19 176 19 150Q19 114 36.5 84Q54 54 84 36.5Q114 19 150 19Q186 19 216 36.5Q246 54 263.5 84Q281 114 281 150Q281 176 271.5 200Q262 224 243 242Z"/></svg>
<svg style="position:absolute;left:2983.50px;top:1564.90px;overflow:visible;" width="68.70" height="68.90" viewBox="0.00 0.00 300.00 300.00" preserveAspectRatio="none"><path fill="#6b6975" d="M248 109 300 120V180L248 191L278 235L235 277L191 248L180 300H120L109 248L65 278L23 235L52 191L0 180V120L52 109L23 65L65 22L109 52L120 0H180L191 52L235 22L278 65ZM229 173 279 163V138L229 127L222 111L250 68L233 50L190 79L173 72L163 22H138L128 72L112 79L69 50L51 68L80 111L73 127L23 138V163L73 173L80 189L51 232L69 250L112 221L128 228L138 278H163L173 228L190 221L233 250L250 232L222 189ZM126 114Q137 107 150 107Q168 107 180.5 119.5Q193 132 193 150Q193 165 183 177Q173 189 158 192Q143 195 129.5 188Q116 181 110.5 166.5Q105 152 109 137.5Q113 123 126 114ZM138 168Q144 171 150 171Q159 171 165 165Q171 159 171 150.5Q171 142 166.5 136.5Q162 131 154.5 129.5Q147 128 140 131.5Q133 135 130 142Q127 149 129.5 156.5Q132 164 138 168Z"/></svg>
<div style="position:absolute;left:3018.10px;top:936.90px;width:46px;height:46px;border-radius:50%;background:#f97e72;color:#2a2139;font:bold 25px/46px 'Liberation Sans',sans-serif;text-align:center;">1</div>
<div style="position:absolute;left:3017.60px;top:1600.30px;width:46px;height:46px;border-radius:50%;background:#f97e72;color:#2a2139;font:bold 25px/46px 'Liberation Sans',sans-serif;text-align:center;">1</div>
<div style="position:absolute;left:112.00px;top:1668.60px;width:98.20px;height:63.40px;background:#f97e72;"></div>
<svg style="position:absolute;left:148.30px;top:1682.20px;overflow:visible;" width="25.40" height="34.00" viewBox="56.00 19.00 186.00 251.00" preserveAspectRatio="none"><path fill="#241b2f" d="M242 179 167 105 242 30 230 19 150 99V111L230 191ZM56 105 133 182 56 258 68 270 150 187V176L68 94Z"/></svg>
<svg style="position:absolute;left:237.00px;top:1680.00px;overflow:visible;" width="31.00" height="42.00" viewBox="37.32 0.00 225.68 300.08" preserveAspectRatio="none"><path fill="#9a92a7" d="M263 103Q263 90 256 78.5Q249 67 237 61Q225 55 212 56Q199 57 188 65Q177 73 172.5 85.5Q168 98 170 111Q172 124 181 133.5Q190 143 203 147Q198 157 189 162.5Q180 168 169 168H132Q110 168 94 183V92Q112 89 122.5 74.5Q133 60 131.5 42Q130 24 116.5 12Q103 0 85 0Q67 0 53.5 12Q40 24 38.5 42Q37 60 47.5 74.5Q58 89 76 92V206Q58 210 47 224Q36 238 37.5 256Q39 274 51.5 286.5Q64 299 82 300Q100 301 114 290Q128 279 131 261Q134 243 125 228Q116 213 98 208Q103 198 112 192.5Q121 187 132 187H169Q187 187 201.5 176.5Q216 166 222 149Q239 147 251 133.5Q263 120 263 103ZM57 47Q57 35 65 27Q73 19 85 19Q97 19 105 27Q113 35 113 46.5Q113 58 105 66.5Q97 75 85 75Q73 75 65 66.5Q57 58 57 47ZM113 252Q113 264 105 272Q97 280 85 280Q73 280 65 272Q57 264 57 252.5Q57 241 65 232.5Q73 224 85 224Q97 224 105 232.5Q113 241 113 252ZM216 131Q204 131 196 122.5Q188 114 188 102.5Q188 91 196 83Q204 75 215.5 75Q227 75 235.5 83Q244 91 244 102.5Q244 114 235.5 122.5Q227 131 216 131Z"/></svg>
<div style="position:absolute;left:283.60px;top:1680.47px;height:42.00px;line-height:42.00px;font-family:'Liberation Sans',sans-serif;font-size:35px;color:#9a92a7;white-space:pre;letter-spacing:0.660px;">main</div>
<svg style="position:absolute;left:407.00px;top:1685.00px;overflow:visible;" width="40.00" height="32.00" viewBox="0.00 37.58 299.00 225.00" preserveAspectRatio="none"><path fill="#9a92a7" d="M38 155 15 178 0 164 39 125H53L93 165L78 179L56 157Q59 188 79.5 211.5Q100 235 130.5 241.5Q161 248 189.5 235Q218 222 233 194L248 205Q229 238 194.5 253Q160 268 123.5 259.5Q87 251 63 222Q39 193 38 155ZM244 146 221 123 206 137 245 177H260L299 138L285 124L262 146Q261 109 238 80Q215 51 179 41.5Q143 32 108.5 45.5Q74 59 54 91L69 102Q85 75 114 63Q143 51 173 59Q203 67 222.5 91Q242 115 244 146Z"/></svg>
<svg style="position:absolute;left:490px;top:1676px" width="44" height="50" viewBox="490 1676 44 50"><g fill="none" stroke="#9a92a7" stroke-width="2.8"><circle cx="502" cy="1688" r="4.7"/><circle cx="502" cy="1711.3" r="4.7"/><circle cx="522.2" cy="1698.4" r="4.7"/><path d="M502 1692.7V1706.6 M502 1716V1718.6 M512.3 1682V1719 M522.2 1703.1V1706.5Q522.2 1712.6 516 1712.6H506.7"/></g></svg>
<svg style="position:absolute;left:582.00px;top:1683.00px;overflow:visible;" width="35.00" height="35.00" viewBox="18.24 18.50 259.76 263.11" preserveAspectRatio="none"><path fill="#9a92a7" d="M161 19Q183 20 203.5 30Q224 40 240 56Q278 97 278 152Q278 195 248 234Q233 252 214 263.5Q195 275 173 279Q125 288 86 266Q66 255 51 238Q36 221 28 200Q20 179 18.5 156Q17 133 24 112Q39 66 77 41Q95 29 116.5 23Q138 17 161 19ZM171 261Q209 252 234 221Q259 187 257 150Q257 127 248.5 106Q240 85 225 69Q196 40 158 37Q139 36 120 40.5Q101 45 86 56Q54 80 42.5 119Q31 158 47.5 194Q64 230 98 249Q114 259 133 262Q152 265 171 261ZM148 141 193 94 206 107 161 154 206 201 193 214 148 167 103 214 90 201 135 154 90 107 103 94Z"/></svg>
<div style="position:absolute;left:631.70px;top:1680.47px;height:42.00px;line-height:42.00px;font-family:'Liberation Sans',sans-serif;font-size:35px;color:#9a92a7;white-space:pre;letter-spacing:-0.465px;">0</div>
<svg style="position:absolute;left:664.00px;top:1684.00px;overflow:visible;" width="34.00" height="32.00" viewBox="19.00 19.00 262.00 243.00" preserveAspectRatio="none"><path fill="#9a92a7" d="M142 19H158L281 249L273 262H27L19 249ZM150 43 43 244H257ZM162 225V206H138V225ZM138 187V112H162V187Z"/></svg>
<div style="position:absolute;left:712.70px;top:1680.47px;height:42.00px;line-height:42.00px;font-family:'Liberation Sans',sans-serif;font-size:35px;color:#9a92a7;white-space:pre;letter-spacing:-0.465px;">0</div>
<svg style="position:absolute;left:1115.70px;top:1679.50px;overflow:visible;" width="20.60" height="41.00" viewBox="75.00 0.00 150.00 300.00" preserveAspectRatio="none"><path fill="#9a92a7" d="M141 0H159V76Q187 79 206 100Q225 121 225 150Q225 179 206 200Q187 221 159 224V300H141V224Q113 221 94 200Q75 179 75 150Q75 121 94 100Q113 79 141 76ZM150 199Q170 199 184.5 184.5Q199 170 199 150Q199 130 184.5 115.5Q170 101 150 101Q130 101 115.5 115.5Q101 130 101 150Q101 170 115.5 184.5Q130 199 150 199Z"/></svg>
<div style="position:absolute;left:1156.40px;top:1680.47px;height:42.00px;line-height:42.00px;font-family:'Liberation Sans',sans-serif;font-size:35px;color:#9a92a7;white-space:pre;letter-spacing:0.663px;">Blame Caleb Jasik (12 months ago)</div>
<div style="position:absolute;left:1778.60px;top:1680.47px;height:42.00px;line-height:42.00px;font-family:'Liberation Sans',sans-serif;font-size:35px;color:#9a92a7;white-space:pre;letter-spacing:0.755px;">Ln 21, Col 3</div>
<div style="position:absolute;left:2025.20px;top:1680.47px;height:42.00px;line-height:42.00px;font-family:'Liberation Sans',sans-serif;font-size:35px;color:#9a92a7;white-space:pre;letter-spacing:0.350px;">Spaces: 4</div>
<div style="position:absolute;left:2230.60px;top:1680.47px;height:42.00px;line-height:42.00px;font-family:'Liberation Sans',sans-serif;font-size:35px;color:#9a92a7;white-space:pre;letter-spacing:1.629px;">UTF-8</div>
<div style="position:absolute;left:2381.80px;top:1680.47px;height:42.00px;line-height:42.00px;font-family:'Liberation Sans',sans-serif;font-size:35px;color:#9a92a7;white-space:pre;letter-spacing:-1.022px;">LF</div>
<div style="position:absolute;left:2467.90px;top:1680.47px;height:42.00px;line-height:42.00px;font-family:'Liberation Sans',sans-serif;font-size:35px;color:#9a92a7;white-space:pre;letter-spacing:0.649px;">Shell Script</div>
<svg style="position:absolute;left:2705.20px;top:1686.00px;overflow:visible;" width="31.00" height="28.00" viewBox="34.00 50.00 237.00 200.00" preserveAspectRatio="none"><path fill="#9a92a7" d="M271 62 112 250 97 249 34 160 49 149 105 228 256 50Z"/></svg>
<div style="position:absolute;left:2749.90px;top:1680.47px;height:42.00px;line-height:42.00px;font-family:'Liberation Sans',sans-serif;font-size:35px;color:#9a92a7;white-space:pre;letter-spacing:0.961px;">Prettier</div>
<svg style="position:absolute;left:2919.00px;top:1682.00px;overflow:visible;" width="36.60" height="36.00" viewBox="0.00 19.00 281.00 262.00" preserveAspectRatio="none"><path fill="#9a92a7" d="M84 19 75 28V57L84 56L94 57V37H263V131H230L206 155V131H168L169 141L168 150H188V178L204 185L238 150H272L281 141V28L272 19ZM120 196Q134 187 142 172.5Q150 158 150 140.5Q150 123 141 108Q132 93 117 84Q102 75 84.5 75Q67 75 51.5 84Q36 93 27.5 108Q19 123 19 140.5Q19 158 27 172.5Q35 187 48 196Q35 202 24 213Q13 224 6 240Q2 251 1 263L0 281H19V271Q19 258 24 246.5Q29 235 38 225.5Q47 216 59 211Q71 206 84 206H85Q98 206 110 211Q122 216 131 225.5Q140 235 145 246.5Q150 258 150 271V281H169L168 262Q167 251 162 240Q156 224 145 213Q134 202 120 196ZM84 187Q65 187 51.5 173.5Q38 160 38 140.5Q38 121 51.5 107.5Q65 94 84.5 94Q104 94 117.5 107.5Q131 121 131 140.5Q131 160 117.5 173.5Q104 187 84 187Z"/></svg>
<svg style="position:absolute;left:3009.00px;top:1682.40px;overflow:visible;" width="29.70" height="36.20" viewBox="38.00 18.53 224.00 262.47" preserveAspectRatio="none"><path fill="#9a92a7" d="M251 198Q244 177 244 154V116Q244 98 238 81.5Q232 65 220 51.5Q208 38 192.5 29.5Q177 21 159 19Q139 17 120 23.5Q101 30 86.5 43.5Q72 57 64 75Q56 93 56 113V154Q56 177 49 198L38 231L46 244H112Q112 259 123 270Q134 281 149.5 281Q165 281 176 270Q187 259 187 244H253L262 231ZM163 257Q157 263 149.5 263Q142 263 136.5 257.5Q131 252 131 244H168Q169 252 163 257ZM59 225 66 204Q75 180 75 154V113Q75 97 81.5 82Q88 67 99.5 56.5Q111 46 126.5 41Q142 36 157 38Q187 42 206 64Q215 75 220 88.5Q225 102 225 116V154Q225 180 233 205L240 225Z"/></svg>
</div></div>
<div id="rim"></div>
</body></html>
